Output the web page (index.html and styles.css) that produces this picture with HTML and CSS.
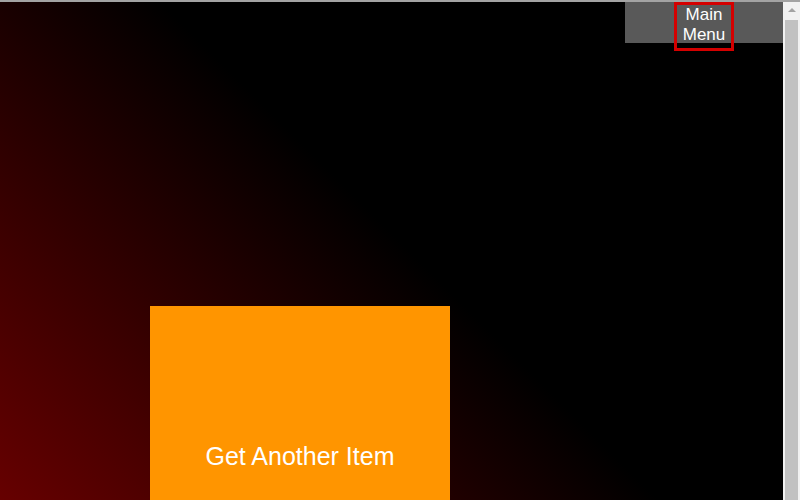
FILE: index.html
```html
<!DOCTYPE html>
<html lang="en">
<head>
<meta charset="utf-8">
<title>Item</title>
<link rel="stylesheet" href="styles.css">
</head>
<body>
<div class="frame">
  <div class="viewport">
    <header class="topbar">
      <nav class="menu">
        <a class="menu-link" href="#">Main Menu</a>
      </nav>
    </header>
    <main class="stage">
      <button class="item-card" type="button">Get Another Item</button>
    </main>
  </div>
  <div class="scrollbar" aria-hidden="true">
    <div class="scroll-btn"><span class="arrow-up"></span></div>
    <div class="thumb"></div>
  </div>
</div>
</body>
</html>
```
FILE: styles.css
```css
html, body {
  margin: 0;
  padding: 0;
  overflow: hidden;
  background: #fff;
}
.frame {
  display: flex;
  border-top: 2px solid #a3a3a3;
  height: 600px;
  font-family: "Liberation Sans", Arial, sans-serif;
}
.viewport {
  flex: 1;
  overflow: hidden;
  background: linear-gradient(45deg, #760000 0%, #000 55%);
}
.scrollbar {
  width: 17px;
  background: #f1f1f1;
  display: flex;
  flex-direction: column;
  align-items: center;
}
.scroll-btn {
  height: 17px;
  width: 17px;
  display: flex;
  justify-content: center;
  align-items: center;
}
.arrow-up {
  width: 0;
  height: 0;
  border-left: 4px solid transparent;
  border-right: 4px solid transparent;
  border-bottom: 4px solid #a3a3a3;
  margin-top: -1px;
}
.thumb {
  width: 13px;
  flex: 1;
  margin-top: 1px;
  background: #c1c1c1;
}
.topbar {
  display: flex;
  justify-content: flex-end;
  height: 41px;
}
.menu {
  width: 158px;
  height: 41px;
  background: #595959;
  display: flex;
  justify-content: center;
  align-items: flex-start;
}
.menu-link {
  width: 54px;
  border: 3px solid #d40000;
  padding-bottom: 3px;
  color: #fff;
  text-decoration: none;
  text-align: center;
  font-size: 17px;
  line-height: 20px;
}
.stage {
  padding: 263px 0 0 150px;
}
.item-card {
  display: flex;
  align-items: center;
  justify-content: center;
  width: 300px;
  height: 300px;
  margin: 0;
  padding: 0;
  border: none;
  background: #ff9500;
  color: #fff;
  font-family: "Liberation Sans", Arial, sans-serif;
  font-size: 25px;
}
```
